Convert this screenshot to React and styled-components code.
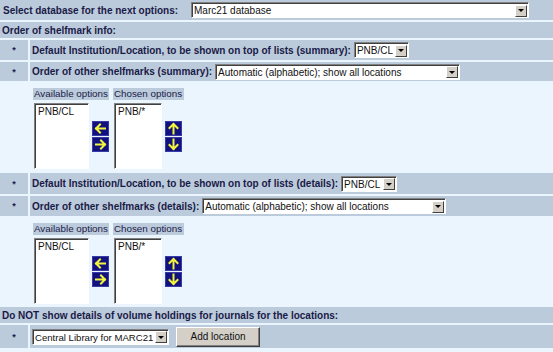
import styled, { createGlobalStyle } from "styled-components";

const GlobalStyle = createGlobalStyle`
  body {
    margin: 0;
    background: #eaf5fd;
    font-family: "Liberation Sans", Arial, sans-serif;
    color: #1a1a48;
  }
`;

const Page = styled.div`
  display: flex;
  flex-direction: column;
  width: 553px;
`;

const Block = styled.div`
  display: flex;
  flex-direction: column;
  gap: 2px;
`;

const Row = styled.div`
  display: flex;
  align-items: center;
  height: ${(p) => p.$h}px;
  background: #bccbdb;
  padding-left: ${(p) => p.$pad || 2}px;
`;

const SplitRow = styled.div`
  display: flex;
  gap: 2px;
  height: ${(p) => p.$h}px;
`;

const StarCell = styled.div`
  width: 28px;
  background: #bccbdb;
  display: flex;
  align-items: center;
  justify-content: center;
  font-size: 9px;
  font-weight: bold;
`;

const FieldCell = styled.div`
  flex: 1;
  display: flex;
  align-items: center;
  background: #bccbdb;
  padding-left: 2px;
`;

const Label = styled.span`
  font-size: 10px;
  font-weight: bold;
  white-space: nowrap;
  margin-right: 3px;
  width: ${(p) => (p.$w ? `${p.$w}px` : "auto")};
`;

const SelectBox = styled.div`
  display: inline-flex;
  align-items: center;
  width: ${(p) => p.$w}px;
  height: 16px;
  box-sizing: border-box;
  background: #fff;
  border: 1px solid;
  border-color: #808080 #ffffff #ffffff #808080;
  box-shadow: inset 1px 1px 0 #404040;
  padding: 1px 1px 0 2px;
  flex-shrink: 0;
`;

const SelectText = styled.span`
  flex: 1;
  font-size: ${(p) => p.$fs}px;
  color: #111;
  white-space: nowrap;
  overflow: hidden;
`;

const DropBtn = styled.span`
  width: 12px;
  height: 12px;
  box-sizing: border-box;
  background: #d4d0c8;
  border: 1px solid;
  border-color: #ffffff #404040 #404040 #ffffff;
  display: flex;
  align-items: center;
  justify-content: center;
  flex-shrink: 0;

  &::after {
    content: "";
    border-left: 3px solid transparent;
    border-right: 3px solid transparent;
    border-top: 3px solid #000;
  }
`;

const Select = ({ w, fs = 10, children }) => (
  <SelectBox $w={w}>
    <SelectText $fs={fs}>{children}</SelectText>
    <DropBtn />
  </SelectBox>
);

const AddButton = styled.button`
  width: 84px;
  height: 20px;
  margin-left: 7px;
  background: #d4d0c8;
  border: 1px solid;
  border-color: #ffffff #404040 #404040 #ffffff;
  box-shadow: inset -1px -1px 0 #808080;
  font-family: "Liberation Sans", Arial, sans-serif;
  font-size: 10px;
  color: #111;
  padding: 0;
`;

const ListSection = styled.div`
  padding: 7px 0 ${(p) => p.$bottom}px 33px;
`;

const ListGrid = styled.div`
  display: grid;
  grid-template-columns: 76px 71px;
  column-gap: 4px;
  row-gap: 3px;
`;

const ListHead = styled.div`
  height: 12px;
  background: #bccbdb;
  font-size: 9.8px;
  line-height: 12px;
  padding-left: 1px;
  white-space: nowrap;
`;

const ListCell = styled.div`
  display: flex;
  align-items: center;
  gap: 3px;
  padding-left: 1px;
`;

const ListBox = styled.div`
  width: ${(p) => p.$w}px;
  height: 66px;
  box-sizing: border-box;
  background: #fff;
  border: 1px solid;
  border-color: #808080 #ffffff #ffffff #808080;
  box-shadow: inset 1px 1px 0 #404040;
  padding: 2px 3px;
  font-size: 10px;
  color: #111;
`;

const ArrowPair = styled.div`
  display: flex;
  flex-direction: column;
  gap: 1px;
`;

const ArrowBtn = ({ dir }) => {
  const paths = {
    left: "M4 7.5 H13 M4 7.5 L8 3.5 M4 7.5 L8 11.5",
    right: "M13 7.5 H4 M13 7.5 L9 3.5 M13 7.5 L9 11.5",
    up: "M8.5 3 V12.5 M8.5 3 L4.5 7 M8.5 3 L12.5 7",
    down: "M8.5 12 V2.5 M8.5 12 L4.5 8 M8.5 12 L12.5 8",
  };
  return (
    <svg width="17" height="15" viewBox="0 0 17 15">
      <rect x="0" y="0" width="17" height="15" fill="#12127e" />
      <rect x="0.5" y="0.5" width="16" height="14" fill="none" stroke="#3a3aa6" />
      <path d={paths[dir]} stroke="#f4f43a" strokeWidth="2" fill="none" strokeLinecap="square" />
    </svg>
  );
};

const ListWidget = ({ bottom }) => (
  <ListSection $bottom={bottom}>
    <ListGrid>
      <ListHead>Available options</ListHead>
      <ListHead>Chosen options</ListHead>
      <ListCell>
        <ListBox $w={55}>PNB/CL</ListBox>
        <ArrowPair>
          <ArrowBtn dir="left" />
          <ArrowBtn dir="right" />
        </ArrowPair>
      </ListCell>
      <ListCell>
        <ListBox $w={48}>PNB/*</ListBox>
        <ArrowPair>
          <ArrowBtn dir="up" />
          <ArrowBtn dir="down" />
        </ArrowPair>
      </ListCell>
    </ListGrid>
  </ListSection>
);

export default function App() {
  return (
    <Page>
      <GlobalStyle />
      <Block>
        <Row $h={20} $pad={3}>
          <Label $w={185}>Select database for the next options:</Label>
          <Select w={338}>Marc21 database</Select>
        </Row>
        <Row $h={16}>
          <Label>Order of shelfmark info:</Label>
        </Row>
        <SplitRow $h={20}>
          <StarCell>*</StarCell>
          <FieldCell>
            <Label>Default Institution/Location, to be shown on top of lists (summary):</Label>
            <Select w={55}>PNB/CL</Select>
          </FieldCell>
        </SplitRow>
        <SplitRow $h={19}>
          <StarCell>*</StarCell>
          <FieldCell>
            <Label>Order of other shelfmarks (summary):</Label>
            <Select w={245}>Automatic (alphabetic); show all locations</Select>
          </FieldCell>
        </SplitRow>
      </Block>
      <ListWidget bottom={4} />
      <Block>
        <SplitRow $h={21}>
          <StarCell>*</StarCell>
          <FieldCell>
            <Label>Default Institution/Location, to be shown on top of lists (details):</Label>
            <Select w={56}>PNB/CL</Select>
          </FieldCell>
        </SplitRow>
        <SplitRow $h={20}>
          <StarCell>*</StarCell>
          <FieldCell>
            <Label>Order of other shelfmarks (details):</Label>
            <Select w={244}>Automatic (alphabetic); show all locations</Select>
          </FieldCell>
        </SplitRow>
      </Block>
      <ListWidget bottom={3} />
      <Block>
        <Row $h={16}>
          <Label>Do NOT show details of volume holdings for journals for the locations:</Label>
        </Row>
        <SplitRow $h={23}>
          <StarCell>*</StarCell>
          <FieldCell>
            <Select w={137} fs={9.6}>Central Library for MARC21</Select>
            <AddButton>Add location</AddButton>
          </FieldCell>
        </SplitRow>
      </Block>
    </Page>
  );
}
